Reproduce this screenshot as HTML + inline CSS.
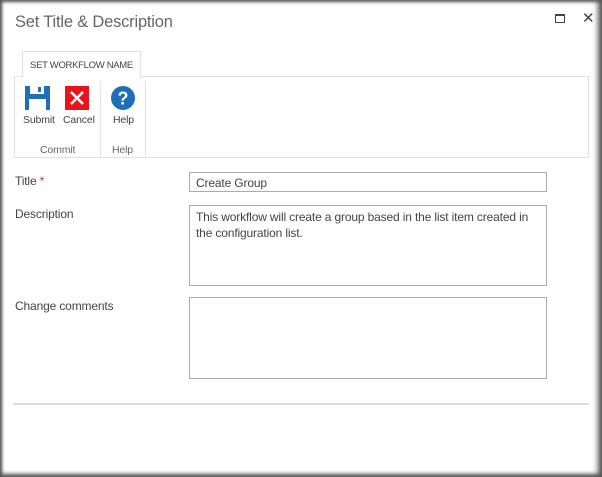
<!DOCTYPE html>
<html><head><style>
*{margin:0;padding:0;box-sizing:border-box}
body{width:602px;height:477px;overflow:hidden;background:#fff;font-family:"Liberation Sans",sans-serif;color:#444;position:relative}
.a{position:absolute}
.frame{left:0;top:0;width:602px;height:477px;box-shadow:inset 3px 0 3px -1px #555,inset -6px 0 6px -2px #555,inset 0 -4px 4px -1px #555,inset 0 3px 3px -1px #666}
.lbl{font-size:12px;color:#444;letter-spacing:-0.15px}
.box{border:1px solid #ababab;background:#fff}
</style></head><body>
<div class="a" style="left:15px;top:13px;font-size:16.5px;color:#666;letter-spacing:-0.2px">Set Title &amp; Description</div>
<div class="a" style="left:555px;top:14px;width:10px;height:9px;border:1px solid #444;border-top-width:2px"></div>
<div class="a" style="left:582px;top:9px;font-size:15px;color:#444">✕</div>

<div class="a" style="left:14px;top:76px;width:575px;height:82px;border:1px solid #e1e1e1"></div>
<div class="a" style="left:22px;top:51px;width:119px;height:27px;border:1px solid #e1e1e1;border-bottom:none;background:#fff;font-size:9.5px;letter-spacing:-0.3px;color:#444;text-align:center;line-height:27px">SET WORKFLOW NAME</div>
<div class="a" style="left:100px;top:81px;width:1px;height:77px;background:#e1e1e1"></div>
<div class="a" style="left:145px;top:81px;width:1px;height:77px;background:#e1e1e1"></div>

<svg class="a" style="left:25px;top:86px" width="25" height="24" viewBox="0 0 25 24"><rect x="0" y="0" width="25" height="24" fill="#1e6fb8"/><rect x="5" y="0" width="14" height="8" fill="#fff"/><rect x="13" y="1" width="3" height="5" fill="#1e6fb8"/><rect x="4" y="13" width="17" height="11" fill="#fff"/></svg>
<svg class="a" style="left:65px;top:86px" width="24" height="24" viewBox="0 0 24 24"><rect width="24" height="24" fill="#e8141b"/><path d="M6 6L18 18M18 6L6 18" stroke="#fff" stroke-width="2.5"/></svg>
<svg class="a" style="left:111px;top:86px" width="24" height="24" viewBox="0 0 24 24"><circle cx="12" cy="12" r="12" fill="#1e6fb8"/><text x="12" y="18.5" text-anchor="middle" font-family="Liberation Sans" font-weight="bold" font-size="18" fill="#fff">?</text></svg>
<div class="a lbl" style="left:23px;top:114px;font-size:10.5px">Submit</div>
<div class="a lbl" style="left:63px;top:114px;font-size:10.5px">Cancel</div>
<div class="a lbl" style="left:113px;top:114px;font-size:10.5px">Help</div>
<div class="a lbl" style="left:40px;top:144px;font-size:10.5px;color:#666">Commit</div>
<div class="a lbl" style="left:112px;top:144px;font-size:10.5px;color:#666">Help</div>

<div class="a lbl" style="left:15px;top:174px">Title <span style="color:#c33">*</span></div>
<div class="a lbl" style="left:15px;top:207px">Description</div>
<div class="a lbl" style="left:15px;top:299px">Change comments</div>
<div class="a box lbl" style="left:189px;top:172px;width:358px;height:20px;padding:3px 6px 0">Create Group</div>
<div class="a box lbl" style="left:189px;top:205px;width:358px;height:81px;padding:3px 6px;line-height:16px">This workflow will create a group based in the list item created in the configuration list.</div>
<div class="a box" style="left:189px;top:297px;width:358px;height:82px"></div>
<div class="a" style="left:13px;top:403px;width:576px;height:2px;background:#dcdcdc"></div>
<div class="a frame"></div>
</body></html>
